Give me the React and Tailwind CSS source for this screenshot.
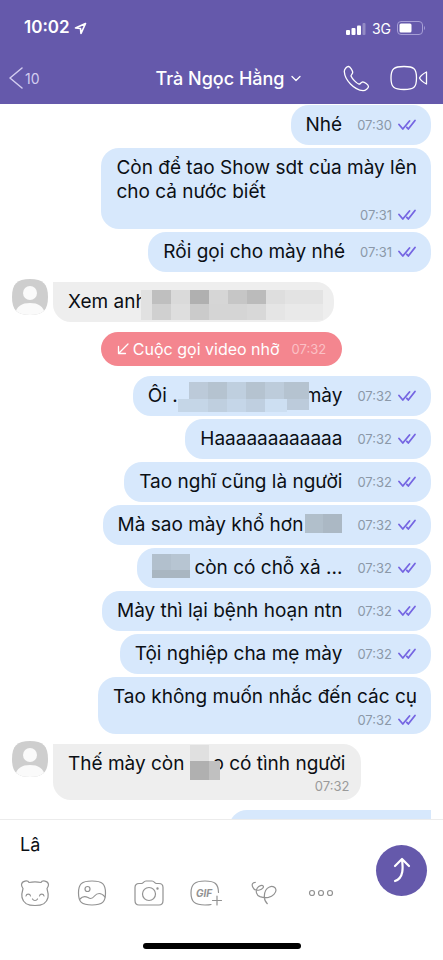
import React, { useState } from 'react';

// each cell is [x, y, width, height, color]
const mosaics = {
  xem: {
    width: 182,
    height: 30,
    cells: [
      [0, 0, 11, 30, '#e1e1e1'],
      [11, 0, 19, 14, '#bfbfbf'],
      [30, 0, 19, 14, '#dadada'],
      [49, 0, 19, 14, '#b0b0b0'],
      [68, 0, 19, 14, '#d6d6d6'],
      [87, 0, 19, 14, '#c6c6c6'],
      [106, 0, 19, 14, '#bbbbbb'],
      [125, 0, 19, 14, '#dedede'],
      [144, 0, 38, 14, '#e3e3e3'],
      [11, 14, 19, 16, '#d0d0d0'],
      [30, 14, 19, 16, '#dedede'],
      [49, 14, 19, 16, '#cbcbcb'],
      [68, 14, 38, 16, '#d5d5d5'],
      [106, 14, 19, 16, '#d8d8d8'],
      [125, 14, 19, 16, '#e5e5e5'],
      [144, 14, 38, 16, '#e9e9e9'],
    ],
  },
  oi: {
    width: 131,
    height: 30,
    cells: [
      [11, 0, 19, 17, '#bccad9'],
      [30, 0, 19, 17, '#b5c3d0'],
      [49, 0, 19, 17, '#bfcfdf'],
      [68, 0, 19, 17, '#b5c3d0'],
      [87, 0, 19, 17, '#bdccdb'],
      [106, 0, 25, 17, '#b5c3d0'],
      [0, 17, 30, 13, '#c5d6e7'],
      [30, 17, 19, 13, '#bfcfdf'],
      [49, 17, 19, 13, '#c5d6e8'],
      [68, 17, 19, 13, '#bfcfe0'],
      [87, 17, 22, 13, '#cddff2'],
      [109, 17, 22, 11, '#bccbdb'],
    ],
  },
  hon: {
    width: 37,
    height: 19,
    cells: [
      [0, 0, 18, 19, '#b1bfcb'],
      [18, 0, 19, 19, '#abb8c4'],
    ],
  },
  con: {
    width: 38,
    height: 24,
    cells: [
      [0, 0, 19, 16, '#b2c0cd'],
      [19, 0, 19, 16, '#b7c5d2'],
      [0, 16, 38, 8, '#a9b6c1'],
    ],
  },
  the: {
    width: 30,
    height: 35,
    cells: [
      [0, 0, 19, 16, '#e0e0e0'],
      [0, 16, 19, 19, '#b0b0b0'],
      [19, 16, 11, 19, '#c0c0c0'],
    ],
  },
};

const Mosaic = ({ name, className = '' }) => {
  const { width, height, cells } = mosaics[name];
  return (
    <svg
      width={width}
      height={height}
      viewBox={`0 0 ${width} ${height}`}
      shapeRendering="crispEdges"
      className={`relative shrink-0 ${className}`}
      aria-hidden="true"
    >
      {cells.map(([x, y, w, h, color]) => (
        <rect key={`${x}-${y}`} x={x} y={y} width={w} height={h} fill={color} />
      ))}
    </svg>
  );
};

const Checks = () => (
  <svg width="19" height="12" viewBox="0 0 19 12" fill="none" stroke="#7565e2" strokeWidth="1.800" strokeLinecap="round" strokeLinejoin="round" aria-hidden="true">
    <path d="M1 5.500 4.800 10 11.500 2" />
    <path d="M8.800 8.300 10.300 10 17 1.500" />
  </svg>
);

const Meta = ({ time, className = '' }) => (
  <div className={`flex items-center gap-1.5 text-[#8b98a8] text-[13px] leading-4 ${className}`}>
    <time>{time}</time>
    <Checks />
  </div>
);

const Sent = ({ time, children }) => (
  <div className="self-end flex items-center h-10 pl-[15px] pr-[14px] rounded-[18px] bg-[#d7e8fc] whitespace-nowrap">
    <p className="flex items-center">{children}</p>
    <Meta time={time} className="ml-[15px]" />
  </div>
);

const SentBlock = ({ time, children }) => (
  <div className="self-end pl-[15px] pr-[14px] pt-2 pb-1.5 rounded-[18px] bg-[#d7e8fc] whitespace-nowrap">
    <p>{children}</p>
    <Meta time={time} className="justify-end mt-[3px]" />
  </div>
);

const Avatar = () => (
  <svg width="36" height="36" viewBox="0 0 36 36" className="shrink-0 -mt-[3px]" aria-hidden="true">
    <defs>
      <clipPath id="avatar-shape">
        <path d="M18 0C31 0 36 5 36 18S31 36 18 36 0 31 0 18 5 0 18 0Z" />
      </clipPath>
    </defs>
    <g clipPath="url(#avatar-shape)">
      <rect width="36" height="36" fill="#cecece" />
      <circle cx="18" cy="14" r="7" fill="#fafafa" />
      <path d="M3 36C4 27 10 24 18 24S32 27 33 36Z" fill="#fafafa" />
    </g>
  </svg>
);

const StatusBar = () => (
  <div className="flex items-center justify-between h-[54px] pt-0.5 pl-6 pr-[17px]">
    <div className="flex items-center gap-1 text-[17px] font-semibold">
      <span>10:02</span>
      <svg width="13" height="13" viewBox="0 0 13 13" fill="none" stroke="currentColor" strokeWidth="1.700" strokeLinejoin="round" aria-hidden="true">
        <path d="M11.500 1.500 1.500 6 6.500 6.500 7 11.500Z" />
      </svg>
    </div>
    <div className="flex items-center gap-1.5 text-[14px]">
      <svg width="20" height="13" viewBox="0 0 20 13" fill="currentColor" aria-hidden="true">
        <rect x="0" y="8" width="4" height="5" rx="1" />
        <rect x="5.500" y="6" width="4" height="7" rx="1" />
        <rect x="11" y="3.500" width="4" height="9.500" rx="1" />
        <rect x="16.500" y="1" width="3" height="12" rx="1" opacity="0.3" />
      </svg>
      <span>3G</span>
      <svg width="29" height="14" viewBox="0 0 29 14" aria-hidden="true">
        <rect x="0.500" y="0.500" width="25" height="13" rx="3.500" fill="none" stroke="#a79fd6" />
        <rect x="2.500" y="2.500" width="12" height="9" rx="1.500" fill="#fff" />
        <path d="M27 5v4c1.300-.5 1.300-3.500 0-4Z" fill="#a79fd6" />
      </svg>
    </div>
  </div>
);

const Header = () => (
  <header className="shrink-0 h-[104px] bg-[#6559ab] text-white">
    <StatusBar />
    <div className="grid grid-cols-[1fr_auto_1fr] items-center h-12 pl-2 pr-[15px]">
      <button type="button" className="flex items-center gap-0.5 text-[14px] text-[#d3cdf0]">
        <svg width="15" height="22" viewBox="0 0 15 22" fill="none" stroke="currentColor" strokeWidth="1.500" strokeLinecap="round" strokeLinejoin="round" aria-hidden="true">
          <path d="M14 1 2 11 14 21" />
        </svg>
        10
      </button>
      <button type="button" className="flex items-center gap-1.5 ml-5 text-[18px] font-medium">
        Trà Ngọc Hằng
        <svg width="10" height="7" viewBox="0 0 10 7" fill="none" stroke="currentColor" strokeWidth="1.300" strokeLinecap="round" strokeLinejoin="round" aria-hidden="true">
          <path d="M1 1.500 5 5.500 9 1.500" />
        </svg>
      </button>
      <div className="flex items-center justify-end gap-5">
        <button type="button" aria-label="Gọi thoại">
          <svg width="27" height="27" viewBox="0 0 27 27" fill="none" stroke="currentColor" strokeWidth="1.300" strokeLinejoin="round">
            <path d="M5.500 1.500C4 1.300 1.200 4 1.300 6.500C1.800 15 11 25 20 25.700C22.500 25.800 25.500 23 25.500 21.500C25.300 19.500 21.500 17 19.700 16.900C18 17 17.300 19.300 16 19.200C13.500 18.300 9.300 14 8 11C7.800 9.700 9.700 9 9.700 7.500C9.500 5.500 7.300 1.800 5.500 1.500Z" />
          </svg>
        </button>
        <button type="button" aria-label="Gọi video">
          <svg width="38" height="26" viewBox="0 0 38 26" fill="none" stroke="currentColor" strokeWidth="1.300" strokeLinejoin="round">
            <path d="M14 1.500C24 1.500 26.500 3.500 26.500 13S24 24.500 14 24.500 1 22.500 1 13 4 1.500 14 1.500Z" />
            <path d="M36.500 7V19C33.500 17.500 30.500 15 29.500 13C30.500 11 33.500 8.500 36.500 7Z" />
          </svg>
        </button>
      </div>
    </div>
  </header>
);

const Messages = () => (
  <main className="flex flex-col flex-1 min-h-0 overflow-hidden px-3 pt-px text-[19px] leading-6 text-[#0b0f14]">
    <div className="flex flex-col shrink-0 gap-[3px]">
      <Sent time="07:30">Nhé</Sent>
      <SentBlock time="07:31">
        Còn để tao Show sdt của mày lên
        <br />
        cho cả nước biết
      </SentBlock>
      <Sent time="07:31">Rồi gọi cho mày nhé</Sent>
    </div>

    <div className="flex items-start shrink-0 gap-[5px] mt-2.5">
      <Avatar />
      <p className="flex items-center h-10 pl-[15px] pr-[11px] rounded-[18px] rounded-tl-none bg-[#eeeeee] whitespace-nowrap">
        Xem anh
        <Mosaic name="xem" className="-ml-1.5 mt-1.5" />
      </p>
    </div>

    <div className="self-center flex items-center shrink-0 h-[34px] mt-2.5 px-4 rounded-full bg-[#f4868f] text-[16px] text-white">
      <svg width="12" height="12" viewBox="0 0 12 12" fill="none" stroke="currentColor" strokeWidth="1.300" strokeLinecap="round" strokeLinejoin="round" className="mr-1" aria-hidden="true">
        <path d="M11 1 1.500 10.500M1.500 3.500v7h7" />
      </svg>
      Cuộc gọi video nhỡ
      <time className="ml-3 text-[13px] text-[#fbc0c5]">07:32</time>
    </div>

    <div className="flex flex-col shrink-0 gap-[3px] mt-2.5">
      <Sent time="07:32">
        Ôi .
        <Mosaic name="oi" className="mt-0.5" />
        <span className="-ml-1">mày</span>
      </Sent>
      <Sent time="07:32">Haaaaaaaaaaaa</Sent>
      <Sent time="07:32">Tao nghĩ cũng là người</Sent>
      <Sent time="07:32">
        Mà sao mày khổ hơn
        <Mosaic name="hon" className="ml-0.5 -mt-1" />
      </Sent>
      <Sent time="07:32">
        <Mosaic name="con" className="mr-1 -mt-1" />
        còn có chỗ xả ...
      </Sent>
      <Sent time="07:32">Mày thì lại bệnh hoạn ntn</Sent>
      <Sent time="07:32">Tội nghiệp cha mẹ mày</Sent>
      <SentBlock time="07:32">Tao không muốn nhắc đến các cụ</SentBlock>
    </div>

    <div className="flex items-start shrink-0 gap-[5px] mt-2.5">
      <Avatar />
      <div className="h-14 pl-[15px] pr-4 pt-2 rounded-[18px] rounded-tl-none bg-[#eeeeee] whitespace-nowrap">
        <p className="flex items-center h-6">
          Thế mày còn
          <Mosaic name="the" className="ml-1.5 -mt-1" />
          <span className="-ml-2">o có tình người</span>
        </p>
        <time className="block -mr-1 text-right text-[13px] leading-5 text-[#9a9a9a]">07:32</time>
      </div>
    </div>

    <div className="self-end shrink-0 w-[202px] h-10 mt-2.5 rounded-tl-[18px] bg-[#d7e8fc]" />
  </main>
);

const Composer = () => {
  const [text, setText] = useState('Lâ');

  return (
    <footer className="shrink-0 h-[141px] border-t border-[#ececec] bg-white">
      <div className="flex items-center justify-between pl-5 pr-4 pt-3">
        <div className="flex-1 min-w-0">
          <input
            type="text"
            aria-label="Tin nhắn"
            className="block w-full h-6 text-[18px] text-[#0b0f14] outline-none"
            value={text}
            onChange={(e) => setText(e.target.value)}
          />
          <div className="flex items-center gap-[27px] mt-[22px] text-[#929292]">
            <button type="button" aria-label="Nhãn dán">
              <svg width="30" height="30" viewBox="0 0 30 30" fill="none" stroke="currentColor" strokeWidth="1.200" strokeLinecap="round" strokeLinejoin="round">
                <path d="M9 4.500C12 3.800 18 3.800 21 4.500C22 2 28 2.500 28.500 6.500C28.500 8.500 27.500 9.500 27 10.500C28 14 28.500 17 28 19.500C26.500 26 22 27.500 15 27.500S3.500 26 2 19.500C1.500 17 2 14 3 10.500C2.500 9.500 1.500 8.500 1.500 6.500C2 2.500 8 2 9 4.500Z" />
                <path d="M6 18C6.500 15.500 10 15.500 10.500 18M19.500 18C20 15.500 23.500 15.500 24 18M12.500 21C13.500 23 16.500 23 17.500 21" />
              </svg>
            </button>
            <button type="button" aria-label="Ảnh">
              <svg width="30" height="30" viewBox="1 0 30 30" fill="none" stroke="currentColor" strokeWidth="1.200" strokeLinecap="round" strokeLinejoin="round">
                <path d="M16 3C26.500 3 29.500 6 29.500 15S26.500 27 16 27 2.500 24 2.500 15 5.500 3 16 3Z" />
                <circle cx="11.500" cy="11" r="2.500" />
                <path d="M4 21C7 17.500 10 18.500 12 19.500C15 21.500 16.500 20.500 18.500 18C21 15 25 14 29 19" />
              </svg>
            </button>
            <button type="button" aria-label="Máy ảnh">
              <svg width="30" height="30" viewBox="0 0 30 30" fill="none" stroke="currentColor" strokeWidth="1.200" strokeLinecap="round" strokeLinejoin="round">
                <path d="M5 5.500H7.500C9.500 5.500 9.500 3 12 3H18C20.500 3 20.500 5.500 22.500 5.500H25C27.500 5.500 29 7 29 9.500V22.500C29 25.500 27.500 27 25 27H5C2.500 27 1 25.500 1 22.500V9.500C1 7 2.500 5.500 5 5.500Z" />
                <circle cx="15" cy="16" r="6.500" />
                <circle cx="23.500" cy="10.500" r="0.600" fill="currentColor" />
              </svg>
            </button>
            <button type="button" aria-label="GIF">
              <svg width="30" height="30" viewBox="1 0 30 30" fill="none" stroke="currentColor" strokeWidth="1.200" strokeLinecap="round" className="overflow-visible">
                <path d="M28.500 14.500C28.300 6 25 3 15 3S1 6 1 15 5 27 15 27C17.500 27 19.500 27 21 26.500" />
                <path d="M27 18v9M22.500 22.500h9" />
                <text x="6" y="18.500" fontSize="10" fontWeight="700" fontStyle="italic" fill="currentColor" stroke="none">GIF</text>
              </svg>
            </button>
            <button type="button" aria-label="Vẽ">
              <svg width="30" height="30" viewBox="0 0 30 30" fill="none" stroke="currentColor" strokeWidth="1.200" strokeLinecap="round" strokeLinejoin="round">
                <path d="M7.300 4.300C4.500 4.500 3.500 6.500 4.700 9C5.700 11.500 8.500 12.700 11.500 12C14.500 11.300 16 9.300 15.200 8C14.300 6.800 11 7.500 9.300 10C7.500 13 8 17 12 18.600C15 19.700 18 19.800 20.500 19.300C25 18.200 28 15 28 12C27.800 9 24.500 7.700 21.500 9C18 10.500 16.300 14.500 16.300 18.500C16.300 21.500 17.500 24 19.300 25.700" />
              </svg>
            </button>
            <button type="button" aria-label="Thêm">
              <svg width="30" height="30" viewBox="0 0 30 30" fill="none" stroke="currentColor" strokeWidth="1.200">
                <circle cx="7" cy="15" r="2.500" />
                <circle cx="16" cy="15" r="2.500" />
                <circle cx="25" cy="15" r="2.500" />
              </svg>
            </button>
          </div>
        </div>
        <button type="button" aria-label="Gửi" className="flex items-center justify-center shrink-0 size-[51px] rounded-full bg-[#6559ab] text-white">
          <svg width="20" height="26" viewBox="0 0 20 26" fill="none" stroke="currentColor" strokeWidth="2.200" strokeLinecap="round" strokeLinejoin="round">
            <path d="M3 9 10 2 17 9M10 2.500C11 10 12 21 3 24" />
          </svg>
        </button>
      </div>
      <div className="w-[158px] h-1.5 mx-auto mt-[35px] rounded-full bg-black" />
    </footer>
  );
};

const App = () => (
  <div className="flex flex-col h-screen overflow-hidden bg-white font-[Inter,'Liberation_Sans',sans-serif]">
    <Header />
    <Messages />
    <Composer />
  </div>
);

export default App;
